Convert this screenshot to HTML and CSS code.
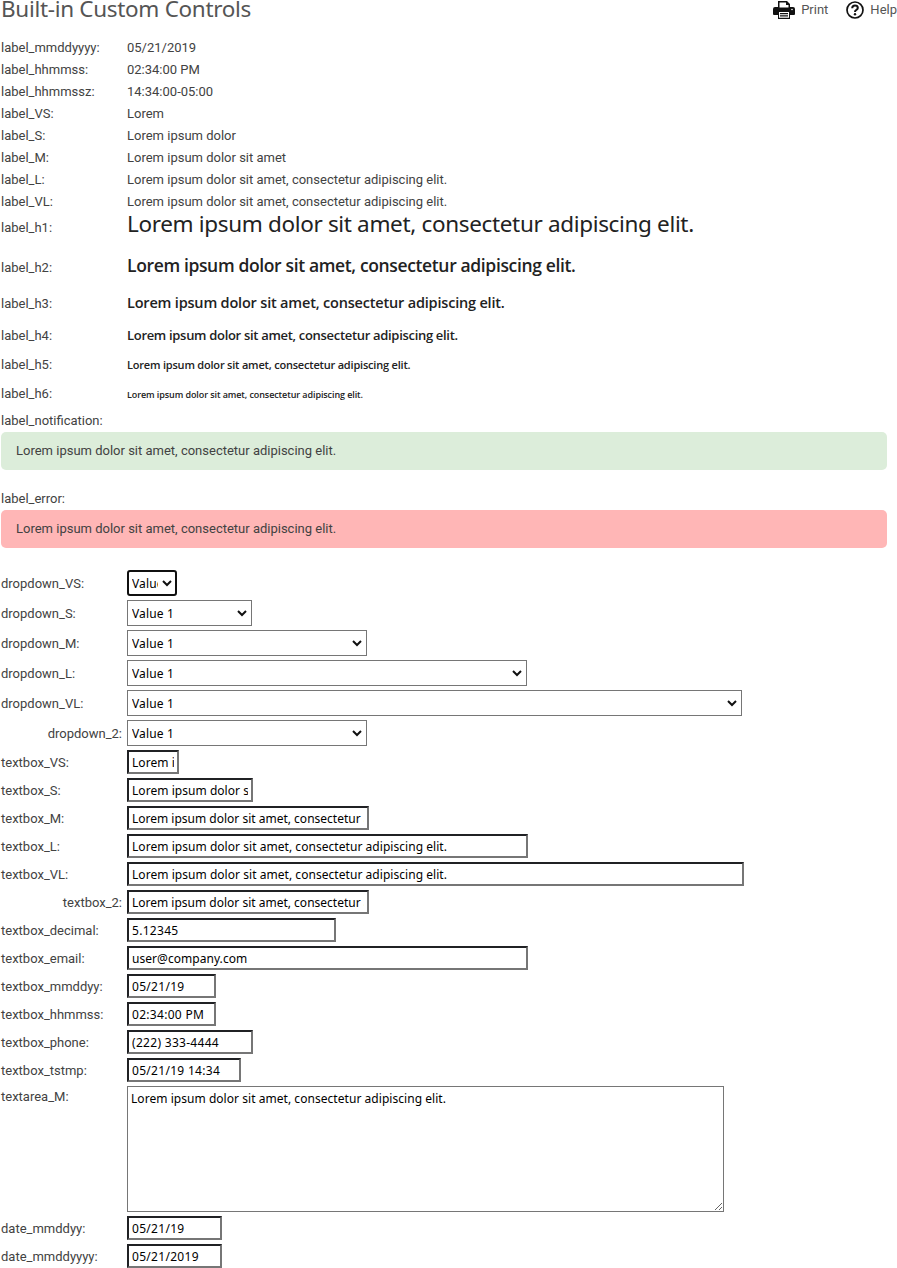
FILE: index.html
```html
<!DOCTYPE html>
<html lang="en">
<head>
<meta charset="utf-8">
<title>Built-in Custom Controls</title>
<link rel="stylesheet" href="styles.css">
</head>
<body>
<header class="header">
  <h1 class="title">Built-in Custom Controls</h1>
  <nav class="tools">
    <a class="tool"><svg class="print-icon" width="22" height="20" viewBox="0 0 22 20"><path fill="#111" d="M5 1h9l3 3v3h3q2 0 2 2v5q0 1-1 1h-4v4H5v-4H1q-1 0-1-1V9q0-2 2-2h3z"/><path fill="#fff" d="M6.500 2.500h6.500v2.500h2.500v2.500h-9zM6 12h10v5.700H6z"/><path fill="#111" d="M7 13h8v1.200H7zM7 15.300h8v1.200H7z"/><circle cx="19" cy="9.500" r=".8" fill="#fff"/></svg><span>Print</span></a>
    <a class="tool tool-help"><svg width="18" height="18" viewBox="0 0 18 18"><circle cx="9" cy="9" r="8" fill="none" stroke="#111" stroke-width="1.700"/><path fill="none" stroke="#111" stroke-width="2" d="M6.200 7.200Q6.300 4.600 9 4.600t2.800 2.300Q11.800 8 10.400 8.900 9 9.700 9 11"/><circle cx="9" cy="13.200" r="1.200" fill="#111"/></svg><span>Help</span></a>
  </nav>
</header>
<main class="form">
  <div class="row"><span class="label">label_mmddyyyy:</span><span class="value">05/21/2019</span></div>
  <div class="row"><span class="label">label_hhmmss:</span><span class="value">02:34:00 PM</span></div>
  <div class="row"><span class="label">label_hhmmssz:</span><span class="value">14:34:00-05:00</span></div>
  <div class="row"><span class="label">label_VS:</span><span class="value">Lorem</span></div>
  <div class="row"><span class="label">label_S:</span><span class="value">Lorem ipsum dolor</span></div>
  <div class="row"><span class="label">label_M:</span><span class="value">Lorem ipsum dolor sit amet</span></div>
  <div class="row"><span class="label">label_L:</span><span class="value">Lorem ipsum dolor sit amet, consectetur adipiscing elit.</span></div>
  <div class="row"><span class="label">label_VL:</span><span class="value">Lorem ipsum dolor sit amet, consectetur adipiscing elit.</span></div>
  <div class="row row-h1"><span class="label">label_h1:</span><h1 class="h h1">Lorem ipsum dolor sit amet, consectetur adipiscing elit.</h1></div>
  <div class="row row-h2"><span class="label">label_h2:</span><h2 class="h h2">Lorem ipsum dolor sit amet, consectetur adipiscing elit.</h2></div>
  <div class="row row-h3"><span class="label">label_h3:</span><h3 class="h h3">Lorem ipsum dolor sit amet, consectetur adipiscing elit.</h3></div>
  <div class="row row-h4"><span class="label">label_h4:</span><h4 class="h h4">Lorem ipsum dolor sit amet, consectetur adipiscing elit.</h4></div>
  <div class="row row-h5"><span class="label">label_h5:</span><h5 class="h h5">Lorem ipsum dolor sit amet, consectetur adipiscing elit.</h5></div>
  <div class="row row-h6"><span class="label">label_h6:</span><h6 class="h h6">Lorem ipsum dolor sit amet, consectetur adipiscing elit.</h6></div>
  <div class="row row-note"><span class="label">label_notification:</span></div>
  <div class="alert notification">Lorem ipsum dolor sit amet, consectetur adipiscing elit.</div>
  <div class="row row-error"><span class="label">label_error:</span></div>
  <div class="alert error">Lorem ipsum dolor sit amet, consectetur adipiscing elit.</div>

  <div class="selects">
    <div class="row row-select"><span class="label">dropdown_VS:</span><div class="select w-vs focused"><span>Value 1</span><svg class="chev" width="10" height="7" viewBox="0 0 10 7"><path d="M1 1l4 4 4-4"/></svg></div></div>
    <div class="row row-select"><span class="label">dropdown_S:</span><div class="select w-s"><span>Value 1</span><svg class="chev" width="10" height="7" viewBox="0 0 10 7"><path d="M1 1l4 4 4-4"/></svg></div></div>
    <div class="row row-select"><span class="label">dropdown_M:</span><div class="select w-m"><span>Value 1</span><svg class="chev" width="10" height="7" viewBox="0 0 10 7"><path d="M1 1l4 4 4-4"/></svg></div></div>
    <div class="row row-select"><span class="label">dropdown_L:</span><div class="select w-l"><span>Value 1</span><svg class="chev" width="10" height="7" viewBox="0 0 10 7"><path d="M1 1l4 4 4-4"/></svg></div></div>
    <div class="row row-select"><span class="label">dropdown_VL:</span><div class="select w-vl"><span>Value 1</span><svg class="chev" width="10" height="7" viewBox="0 0 10 7"><path d="M1 1l4 4 4-4"/></svg></div></div>
    <div class="row row-select"><span class="label right">dropdown_2:</span><div class="select w-m"><span>Value 1</span><svg class="chev" width="10" height="7" viewBox="0 0 10 7"><path d="M1 1l4 4 4-4"/></svg></div></div>
  </div>
  <div class="row row-text"><span class="label">textbox_VS:</span><input class="text t-vs" value="Lorem ipsum"></div>
  <div class="row row-text"><span class="label">textbox_S:</span><input class="text t-s" value="Lorem ipsum dolor sit amet"></div>
  <div class="row row-text"><span class="label">textbox_M:</span><input class="text t-m" value="Lorem ipsum dolor sit amet, consectetur adipiscing elit."></div>
  <div class="row row-text"><span class="label">textbox_L:</span><input class="text t-l" value="Lorem ipsum dolor sit amet, consectetur adipiscing elit."></div>
  <div class="row row-text"><span class="label">textbox_VL:</span><input class="text t-vl" value="Lorem ipsum dolor sit amet, consectetur adipiscing elit."></div>
  <div class="row row-text"><span class="label right">textbox_2:</span><input class="text t-m" value="Lorem ipsum dolor sit amet, consectetur adipiscing elit."></div>
  <div class="row row-text"><span class="label">textbox_decimal:</span><input class="text num t-decimal" value="5.12345"></div>
  <div class="row row-text"><span class="label">textbox_email:</span><input class="text t-l" value="user@company.com"></div>
  <div class="row row-text"><span class="label">textbox_mmddyy:</span><input class="text num t-time" value="05/21/19"></div>
  <div class="row row-text"><span class="label">textbox_hhmmss:</span><input class="text num t-time" value="02:34:00 PM"></div>
  <div class="row row-text"><span class="label">textbox_phone:</span><input class="text num t-s" value="(222) 333-4444"></div>
  <div class="row row-text"><span class="label">textbox_tstmp:</span><input class="text num t-stamp" value="05/21/19 14:34"></div>
  <div class="row row-area"><span class="label">textarea_M:</span><textarea class="area">Lorem ipsum dolor sit amet, consectetur adipiscing elit.</textarea></div>
  <div class="row row-text"><span class="label">date_mmddyy:</span><input class="text num t-date" value="05/21/19"></div>
  <div class="row row-text"><span class="label">date_mmddyyyy:</span><input class="text num t-date" value="05/21/2019"></div>
</main>
</body>
</html>
```
FILE: styles.css
```css
* { box-sizing: border-box; }
html, body { height: 1268px; overflow: hidden; }
body { margin: 0; background: #fff; color: #424242; font: 13px/22px Roboto, sans-serif; }
.header { height: 36px; display: flex; justify-content: space-between; align-items: flex-start; }
.title { margin: -6px 0 0 1px; font: 400 22.5px/30px "Noto Sans", sans-serif; letter-spacing: -.31px; color: #555; }
.tools { display: flex; gap: 18px; margin-top: -1px; color: #555; }
.tool { display: flex; align-items: center; gap: 6px; height: 22px; }
.form { padding-left: 1px; }
.row { display: flex; align-items: center; height: 22px; white-space: nowrap; }
.label { flex: none; width: 126px; }
.label, .value { padding-top: 2px; }
.right { padding-right: 5px; text-align: right; }
.h { margin: 0; color: #222; font-family: "Open Sans", sans-serif; font-weight: 600; }
.row-h1 { height: 30px; }
.h1 { margin-top: -6px; font: 400 22.5px/30px "Noto Sans", sans-serif; letter-spacing: -.34px; }
.row-h2 { margin-top: 14px; }
.h2 { font-size: 17.5px; margin-top: -4px; letter-spacing: -.36px; }
.row-h3 { margin-top: 14px; }
.h3 { font-size: 14.5px; margin-top: -1px; letter-spacing: -.19px; }
.row-h4 { margin-top: 10px; }
.h4 { font-size: 13px; letter-spacing: -.31px; }
.row-h5 { margin-top: 7px; }
.h5 { font-size: 11px; margin-top: 2px; letter-spacing: -.2px; }
.row-h6 { margin-top: 7px; }
.h6 { font-size: 9px; margin-top: 4px; letter-spacing: -.09px; }
.row-note { margin-top: 5px; }
.row-error { margin-top: 17px; }
.alert { width: 886px; height: 38px; margin-top: 1px; padding: 8px 15px; border-radius: 5px; }
.notification { background: #dcedda; }
.error { background: #ffb6b6; }
.selects { margin-top: 20px; }
.row-select { height: 30px; }
.select, .text, .area { font: 12px/16px "Noto Sans", sans-serif; letter-spacing: .045px; color: #000; background: #fff; }
.select { display: flex; align-items: center; justify-content: space-between; height: 26px; border: 1px solid #767676; padding: 0 4px; letter-spacing: .15px; }
.select span { flex: 1; min-width: 0; overflow: hidden; padding-top: 2px; }
.chev { flex: none; margin-top: 1px; fill: none; stroke: #111; stroke-width: 2; }
.focused { border: 2px solid #101010; border-radius: 3px; padding: 0 3px; }
.focused .chev { margin-left: 4px; }
.w-vs { width: 50px; }
.w-s { width: 125px; }
.w-m { width: 240px; }
.w-l { width: 400px; }
.w-vl { width: 615px; }
.row-text { height: 28px; }
.text { height: 24px; margin: 0; padding: 1px 3px; border: 2px solid; border-color: #202124 #767676 #767676 #202124; }
.num { letter-spacing: .3px; }
.t-vs { width: 52px; }
.t-s { width: 126px; }
.t-m { width: 242px; letter-spacing: 0; }
.t-l { width: 401px; }
.t-vl { width: 617px; }
.t-decimal { width: 209px; }
.t-time { width: 89px; }
.t-stamp { width: 114px; }
.t-date { width: 95px; }
.row-area { height: 130px; align-items: flex-start; padding-top: 2px; }
.row-area .label { padding-top: 0; }
.area { width: 597px; height: 126px; margin: 0; padding: 4px 3px; border: 1px solid #767676; }
```
